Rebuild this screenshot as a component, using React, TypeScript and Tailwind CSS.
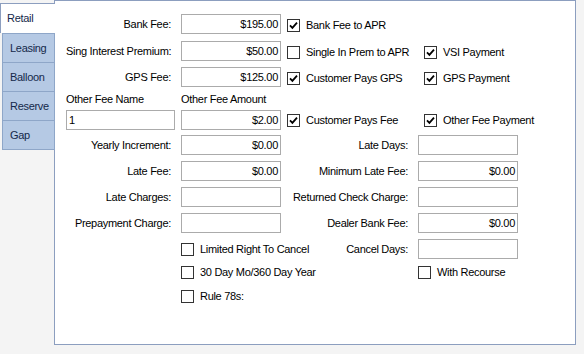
import React from "react";

type BoxProps = { value?: string; w?: string; left?: boolean };

function Box({ value = "", w = "w-[100px]", left = false }: BoxProps) {
  return (
    <div
      className={`${w} h-[20px] shrink-0 border border-[#ababab] bg-white flex items-center ${
        left ? "justify-start pl-[2px]" : "justify-end pr-[2px]"
      }`}
    >
      {value}
    </div>
  );
}

function Check({ checked = false }: { checked?: boolean }) {
  return (
    <span className="w-[13px] h-[13px] shrink-0 border border-[#333333] bg-white flex items-center justify-center">
      {checked && (
        <svg width="9" height="9" viewBox="0 0 9 9">
          <path d="M1 4.3 L3.4 6.8 L8 1.6" stroke="#000" strokeWidth="1.8" fill="none" />
        </svg>
      )}
    </span>
  );
}

function CheckLabel({ text, checked }: { text: string; checked?: boolean }) {
  return (
    <div className="flex items-center gap-[6px] whitespace-nowrap">
      <Check checked={checked} />
      <span>{text}</span>
    </div>
  );
}

function Label({ text, w = "w-[105px]" }: { text: string; w?: string }) {
  return <div className={`${w} shrink-0 text-right whitespace-nowrap`}>{text}</div>;
}

const tabs = ["Leasing", "Balloon", "Reserve", "Gap"];

export default function App() {
  return (
    <div className="w-[584px] h-[354px] bg-[#f4f4f4] font-['Liberation_Sans',Arial,sans-serif] text-[11px] tracking-[-0.3px] text-black">
      <div className="flex h-[345px]">
        {/* Tab strip */}
        <div className="w-[55px] flex flex-col">
          <div className="h-[3px] border-r border-[#8c9ebf]" />
          <div className="h-[30px] bg-white border-t border-l border-[#8c9ebf] pl-[6px] flex items-center text-[#14284a]">
            Retail
          </div>
          {tabs.map((t, i) => (
            <div
              key={t}
              className={`ml-[2px] h-[29px] bg-[#b5c9e4] border-t border-l border-r border-[#8ea6c8] pl-[7px] flex items-center text-[#14284a] ${
                i === tabs.length - 1 ? "border-b h-[30px]" : ""
              }`}
            >
              {t}
            </div>
          ))}
          <div className="flex-1 border-r border-[#8c9ebf]" />
        </div>

        {/* Panel */}
        <div className="w-[521px] bg-white border-t border-r border-b border-[#8c9ebf] pl-[11px] pt-[13px]">
          {/* Bank Fee */}
          <div className="flex items-center h-[20px]">
            <Label text="Bank Fee:" />
            <div className="ml-[10px]"><Box value="$195.00" /></div>
            <div className="ml-[6px] w-[137px] pt-[2px]"><CheckLabel text="Bank Fee to APR" checked /></div>
          </div>

          <div className="flex items-center h-[20px] mt-[7px]">
            <Label text="Sing Interest Premium:" />
            <div className="ml-[10px]"><Box value="$50.00" /></div>
            <div className="ml-[6px] w-[137px] pt-[2px]"><CheckLabel text="Single In Prem to APR" /></div>
            <div className="pt-[2px]"><CheckLabel text="VSI Payment" checked /></div>
          </div>

          <div className="flex items-center h-[20px] mt-[6px]">
            <Label text="GPS Fee:" />
            <div className="ml-[10px]"><Box value="$125.00" /></div>
            <div className="ml-[6px] w-[137px] pt-[2px]"><CheckLabel text="Customer Pays GPS" checked /></div>
            <div className="pt-[2px]"><CheckLabel text="GPS Payment" checked /></div>
          </div>

          {/* Other fee */}
          <div className="flex h-[13px] leading-[13px] mt-[6px]">
            <div className="w-[115px]">Other Fee Name</div>
            <div>Other Fee Amount</div>
          </div>
          <div className="flex items-center h-[20px] mt-[4px]">
            <Box value="1" w="w-[109px]" left />
            <div className="ml-[6px]"><Box value="$2.00" /></div>
            <div className="ml-[6px] w-[137px]"><CheckLabel text="Customer Pays Fee" checked /></div>
            <CheckLabel text="Other Fee Payment" checked />
          </div>

          {/* Two column rows */}
          {[
            ["Yearly Increment:", "$0.00", "Late Days:", ""],
            ["Late Fee:", "$0.00", "Minimum Late Fee:", "$0.00"],
            ["Late Charges:", "", "Returned Check Charge:", ""],
            ["Prepayment Charge:", "", "Dealer Bank Fee:", "$0.00"],
          ].map(([l1, v1, l2, v2], i) => (
            <div key={l1} className={`flex items-center h-[20px] ${i === 0 ? "mt-[5px]" : "mt-[6px]"}`}>
              <Label text={l1} />
              <div className="ml-[10px]"><Box value={v1} /></div>
              <Label text={l2} w="w-[127px]" />
              <div className="ml-[10px]"><Box value={v2} /></div>
            </div>
          ))}

          <div className="flex items-center h-[20px] mt-[6px]">
            <div className="w-[115px] shrink-0" />
            <div className="w-[227px] flex items-center">
              <CheckLabel text="Limited Right To Cancel" />
              <div className="flex-1 text-right whitespace-nowrap">Cancel Days:</div>
            </div>
            <div className="ml-[10px]"><Box /></div>
          </div>

          <div className="flex items-center h-[20px] mt-[3px]">
            <div className="w-[115px] shrink-0" />
            <div className="w-[237px]"><CheckLabel text="30 Day Mo/360 Day Year" /></div>
            <CheckLabel text="With Recourse" />
          </div>

          <div className="flex items-center h-[20px] mt-[4px]">
            <div className="w-[115px] shrink-0" />
            <CheckLabel text="Rule 78s:" />
          </div>
        </div>
      </div>
    </div>
  );
}
